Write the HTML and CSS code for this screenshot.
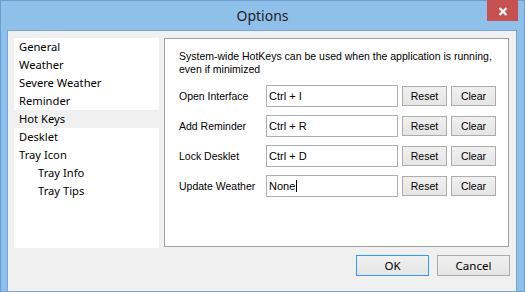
FILE: index.html
```html
<!DOCTYPE html>
<html lang="en">
<head>
    <meta charset="UTF-8">
    <meta name="viewport" content="width=device-width, initial-scale=1.0">
    <title>Options</title>
    <link rel="stylesheet" href="styles.css">
</head>
<body>
    <div class="window">
        <div class="titlebar">
            <span></span>
            <span class="title">Options</span>
            <button class="close" type="button">
                <svg width="10" height="9" viewBox="0 0 10 9">
                    <path d="M1.5 1 L8.5 8 M8.5 1 L1.5 8" stroke="#fff" stroke-width="2.2" fill="none"/>
                </svg>
            </button>
        </div>
        <div class="client">
            <div class="main">
                <ul class="nav">
                    <li>General</li>
                    <li>Weather</li>
                    <li>Severe Weather</li>
                    <li>Reminder</li>
                    <li class="selected">Hot Keys</li>
                    <li>Desklet</li>
                    <li>Tray Icon</li>
                    <li class="sub">Tray Info</li>
                    <li class="sub">Tray Tips</li>
                </ul>
                <div class="group">
                    <p class="intro">System-wide HotKeys can be used when the application is running, even if minimized</p>
                    <div class="hotkeys">
                        <label>Open Interface</label>
                        <div class="field">Ctrl + I</div>
                        <button class="btn" type="button">Reset</button>
                        <button class="btn" type="button">Clear</button>

                        <label>Add Reminder</label>
                        <div class="field">Ctrl + R</div>
                        <button class="btn" type="button">Reset</button>
                        <button class="btn" type="button">Clear</button>

                        <label>Lock Desklet</label>
                        <div class="field">Ctrl + D</div>
                        <button class="btn" type="button">Reset</button>
                        <button class="btn" type="button">Clear</button>

                        <label>Update Weather</label>
                        <div class="field"><span class="caret">None</span></div>
                        <button class="btn" type="button">Reset</button>
                        <button class="btn" type="button">Clear</button>
                    </div>
                </div>
            </div>
            <div class="footer">
                <button class="btn big default" type="button">OK</button>
                <button class="btn big" type="button">Cancel</button>
            </div>
        </div>
    </div>
</body>
</html>
```

FILE: styles.css
```css
body {
    margin: 0;
    background: #ffffff;
    font-family: "Liberation Sans", Arial, sans-serif;
}
.window {
    width: 525px;
    height: 292px;
    box-sizing: border-box;
    background: #8fc0ea;
    border: 1px solid #6f9dd2;
}
.titlebar {
    height: 29px;
    display: grid;
    grid-template-columns: 1fr auto 1fr;
    align-items: start;
}
.title {
    font-family: "Noto Sans", sans-serif;
    font-size: 14px;
    line-height: 29px;
    color: #1e1e1e;
}
.close {
    justify-self: end;
    margin: -1px 6px 0 0;
    width: 31px;
    height: 21px;
    padding: 2px 0 0;
    border: none;
    background: #c75050;
    display: flex;
    align-items: center;
    justify-content: center;
}
.client {
    margin: 0 7px 6px 6px;
    height: 253px;
    border: 1px solid #7aa5d6;
    background: #f0f0f0;
    padding: 7px 0 0 6px;
    box-sizing: content-box;
}
.main {
    display: flex;
    gap: 5px;
    padding-right: 7px;
}
.nav {
    list-style: none;
    margin: 0;
    padding: 0;
    width: 145px;
    height: 210px;
    background: #ffffff;
    font-family: "Noto Sans", sans-serif;
    font-size: 11.2px;
    color: #000;
}
.nav li {
    height: 18px;
    line-height: 18px;
    padding-left: 5px;
}
.nav li.sub {
    padding-left: 24px;
}
.nav li.selected {
    background: #f0f0f0;
}
.group {
    width: 345px;
    height: 209px;
    box-sizing: border-box;
    background: #ffffff;
    border: 1px solid #a0a0a0;
    padding: 11px 12px 0 14px;
    font-size: 10.5px;
    color: #000;
}
.intro {
    margin: 0 -8px 0 0;
    line-height: 13px;
}
.hotkeys {
    margin-top: 9px;
    display: grid;
    grid-template-columns: 83px 132px 45px 45px;
    grid-auto-rows: 22px;
    row-gap: 8px;
    column-gap: 4px;
    align-items: center;
}
.field {
    height: 22px;
    box-sizing: border-box;
    border: 1px solid #abadb3;
    padding: 3px 2px 0;
    font-size: 11px;
    line-height: 14px;
}
.caret {
    border-right: 1px solid #000;
    padding-right: 1px;
}
.btn {
    height: 20px;
    padding: 0;
    border: 1px solid #acacac;
    background: linear-gradient(#f0f0f0, #e5e5e5);
    font-family: "Liberation Sans", Arial, sans-serif;
    font-size: 10.5px;
    color: #000;
}
.footer {
    margin-top: 7px;
    padding-right: 6px;
    display: flex;
    justify-content: flex-end;
    gap: 8px;
}
.btn.big {
    width: 73px;
    height: 21px;
    font-family: "Noto Sans", sans-serif;
    font-size: 11.5px;
}
.btn.default {
    border-color: #3399ff;
}
```
